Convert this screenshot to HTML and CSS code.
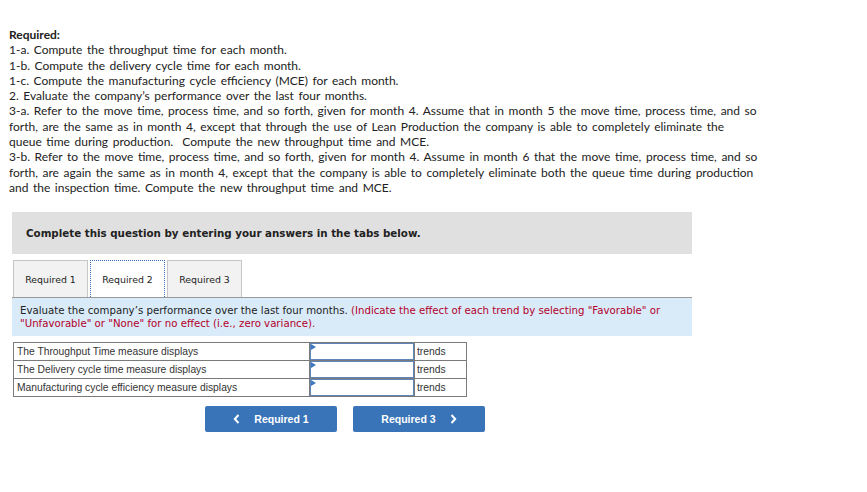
FILE: index.html
```html
<!DOCTYPE html>
<html>
<head>
<meta charset="utf-8">
<link rel="stylesheet" href="styles.css">
</head>
<body>
<div class="page">
  <div class="required">
    <div class="req-title">Required:</div>
    <div>1-a. Compute the throughput time for each month.</div>
    <div>1-b. Compute the delivery cycle time for each month.</div>
    <div>1-c. Compute the manufacturing cycle efficiency (MCE) for each month.</div>
    <div>2. Evaluate the company’s performance over the last four months.</div>
    <div>3-a. Refer to the move time, process time, and so forth, given for month 4. Assume that in month 5 the move time, process time, and so forth, are the same as in month 4, except that through the use of Lean Production the company is able to completely eliminate the queue time during production.&nbsp; Compute the new throughput time and MCE.</div>
    <div>3-b. Refer to the move time, process time, and so forth, given for month 4. Assume in month 6 that the move time, process time, and so forth, are again the same as in month 4, except that the company is able to completely eliminate both the queue time during production and the inspection time. Compute the new throughput time and MCE.</div>
  </div>

  <div class="complete-box">Complete this question by entering your answers in the tabs below.</div>

  <div class="tabs">
    <div class="tab">Required 1</div>
    <div class="tab active">Required 2</div>
    <div class="tab">Required 3</div>
  </div>

  <div class="instructions">
    Evaluate the company’s performance over the last four months. <span class="hint">(Indicate the effect of each trend by selecting "Favorable" or "Unfavorable" or "None" for no effect (i.e., zero variance).</span>
  </div>

  <table class="answers">
    <tr>
      <td class="label">The Throughput Time measure displays</td>
      <td class="select"><div class="dropdown"><span class="tri"></span></div></td>
      <td class="unit">trends</td>
    </tr>
    <tr>
      <td class="label">The Delivery cycle time measure displays</td>
      <td class="select"><div class="dropdown"><span class="tri"></span></div></td>
      <td class="unit">trends</td>
    </tr>
    <tr>
      <td class="label">Manufacturing cycle efficiency measure displays</td>
      <td class="select"><div class="dropdown"><span class="tri"></span></div></td>
      <td class="unit">trends</td>
    </tr>
  </table>

  <div class="nav">
    <button class="btn"><svg class="chev" width="7" height="10" viewBox="0 0 7 10"><path d="M5.5 1 L1.8 5 L5.5 9" fill="none" stroke="#fff" stroke-width="2"/></svg>Required 1</button>
    <button class="btn">Required 3<svg class="chev right" width="7" height="10" viewBox="0 0 7 10"><path d="M1.5 1 L5.2 5 L1.5 9" fill="none" stroke="#fff" stroke-width="2"/></svg></button>
  </div>
</div>
</body>
</html>
```

FILE: styles.css
```css
html, body {
  margin: 0;
  padding: 0;
  background: #fff;
}

.page {
  padding: 27px 0 0 0;
}

.required {
  padding: 0 9px;
  width: 752px;
  font-family: Lato, "Open Sans", sans-serif;
  font-size: 12px;
  word-spacing: 1.5px;
  line-height: 15.3px;
  color: #222;
}

.req-title {
  font-weight: bold;
}

.complete-box {
  margin: 17px 0 0 12px;
  width: 666px;
  height: 42px;
  padding-left: 14px;
  background: #e0e0e0;
  display: flex;
  align-items: center;
  font-family: "DejaVu Sans", Verdana, sans-serif;
  font-weight: bold;
  font-size: 10.3px;
  color: #222;
}

.tabs {
  display: flex;
  gap: 2px;
  margin: 6px 0 0 13px;
}

.tab {
  width: 73px;
  height: 36px;
  border: 1px solid #c6c6c6;
  border-bottom: none;
  background: #f2f2f2;
  display: flex;
  align-items: center;
  justify-content: center;
  font-family: "DejaVu Sans", Verdana, sans-serif;
  font-size: 9.4px;
  color: #222;
}

.tab.active {
  background: #fff;
  border: 1px dotted #3a6fb5;
  border-bottom: none;
}

.instructions {
  margin-left: 12px;
  width: 664px;
  padding: 7px 8px 6px 8px;
  background: #d9ebf9;
  border-top: 1px solid #9a9a9a;
  font-family: "DejaVu Sans", Verdana, sans-serif;
  font-size: 10.2px;
  line-height: 12.5px;
  color: #222;
}

.hint {
  color: #b4002a;
}

.answers {
  margin: 6px 0 0 13px;
  border-collapse: collapse;
  font-family: "Liberation Sans", Arial, sans-serif;
  font-size: 10.3px;
  color: #333;
}

.answers td {
  border: 1px solid #7a7a7a;
  height: 17px;
  padding: 0;
}

.answers .label {
  width: 292px;
  padding-left: 3px;
}

.answers .select {
  width: 104px;
}

.answers .unit {
  width: 49px;
  padding-left: 2px;
}

.dropdown {
  position: relative;
  height: 15px;
  border: 1px solid #5f86b8;
  background: #fff;
}

.tri {
  position: absolute;
  left: 0;
  top: 0;
  width: 0;
  height: 0;
  border-top: 3px solid transparent;
  border-bottom: 3px solid transparent;
  border-left: 5px solid #3f78c0;
}

.nav {
  display: flex;
  gap: 16px;
  margin: 9px 0 0 205px;
}

.btn {
  width: 132px;
  height: 26px;
  border: none;
  border-radius: 2px;
  background: #3a74b8;
  color: #fff;
  font-family: "Liberation Sans", Arial, sans-serif;
  font-weight: bold;
  font-size: 10.5px;
  display: flex;
  align-items: center;
  justify-content: center;
  gap: 14px;
  padding: 0;
}

.chev {
  display: block;
}
```
